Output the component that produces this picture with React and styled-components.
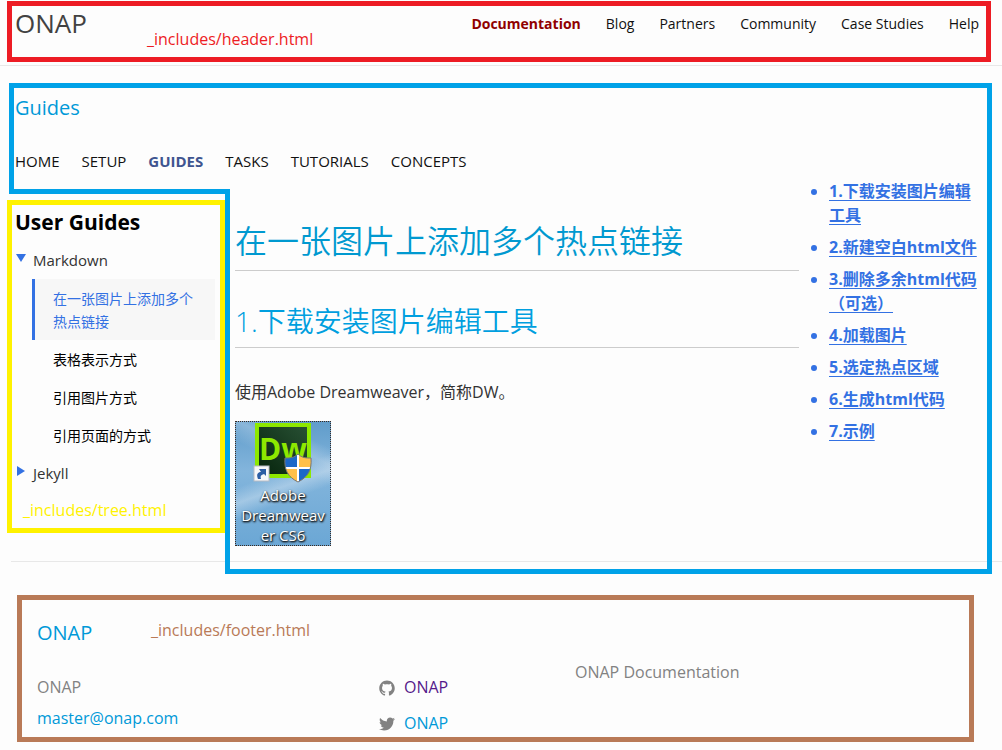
import React, { useState } from "react";
import styled, { createGlobalStyle } from "styled-components";

const GlobalStyle = createGlobalStyle`
  * { box-sizing: border-box; }
  body {
    margin: 0;
    background: #fdfdfd;
    color: #333;
    font-family: "Open Sans", "Noto Sans CJK SC", sans-serif;
    font-size: 16px;
    line-height: 24px;
  }
  h1, h2, h3, p, ul, figure { margin: 0; padding: 0; font-weight: 400; }
  a { color: inherit; text-decoration: none; }
  button { font: inherit; color: inherit; border: 0; background: none; padding: 0; }
`;

const FileLabel = styled.span`
  color: ${(p) => p.$color};
  font-size: 16px;
  line-height: 20px;
`;

/* Header */
const HeaderBar = styled.header`
  padding: 1px 11px 3px 7px;
  border-bottom: 1px solid #e8e8e8;
`;

const HeaderFrame = styled.div`
  display: flex;
  align-items: flex-start;
  border: 5px solid #ed1c24;
  padding: 0 7px 0 3px;
  min-height: 61px;
  ${FileLabel} { margin-top: 23px; }
`;

const SiteTitle = styled.a`
  width: 132px;
  font-size: 26px;
  line-height: 34px;
  color: #424242;
`;

const SiteNav = styled.nav`
  display: flex;
  gap: 25px;
  margin: 8px 0 0 auto;
`;

const NavLink = styled.a`
  font-size: 14px;
  line-height: 20px;
  color: ${(p) => p.$color || "#111"};
  font-weight: ${(p) => (p.$active ? 700 : 400)};
`;

/* Guides frame */
const Main = styled.main`
  margin: 17px 10px 0 9px;
`;

const GuidesTop = styled.section`
  border: 5px solid #00a2e8;
  border-bottom: 0;
  padding: 6px 1px 18px;
`;

const SectionTitle = styled.h2`
  font-size: 20px;
  line-height: 28px;
  color: #0099d8;
`;

const Tabs = styled.nav`
  display: flex;
  gap: 22px;
  margin-top: 29px;
`;

const TabLink = styled(NavLink)`
  font-size: 15px;
`;

const Columns = styled.div`
  display: grid;
  grid-template-columns: 216px 1fr;
`;

const SideColumn = styled.div`
  border-top: 5px solid #00a2e8;
`;

const TreeFrame = styled.aside`
  margin: 6px 0 0 -2px;
  border: 5px solid #fff200;
  padding: 3px 5px 8px 3px;
  display: flex;
  flex-direction: column;
  ${FileLabel} { margin: 15px 0 0 8px; }
`;

const TreeTitle = styled.h2`
  font-size: 21px;
  line-height: 28px;
  font-weight: 700;
  color: #000;
`;

const TreeToggle = styled.button`
  display: flex;
  align-items: center;
  gap: 6px;
  font-size: 15px;
  line-height: 24px;
  margin-top: ${(p) => p.$gap};
  svg { margin-bottom: 4px; }
`;

const TreeList = styled.ul`
  list-style: none;
  margin: 7px 0 0 17px;
`;

const TreeLink = styled.a`
  display: block;
  padding: 8px 18px 7px;
  border-left: 3px solid ${(p) => (p.$active ? "#3371e3" : "transparent")};
  background: ${(p) => (p.$active ? "#f7f7f7" : "none")};
  color: ${(p) => (p.$active ? "#3371e3" : "#000")};
  font-size: 14px;
  line-height: 23px;
`;

const ContentFrame = styled.div`
  display: flex;
  border: 5px solid #00a2e8;
  border-top: 0;
  padding: 30px 0 23px 5px;
`;

const Article = styled.article`
  flex: 1;
  min-width: 0;
`;

const ArticleTitle = styled.h1`
  font-size: 32px;
  line-height: 44px;
  font-weight: 350;
  color: #0099d0;
  padding-bottom: 7px;
  border-bottom: 1px solid #ccc;
`;

const ArticleHeading = styled.h2`
  font-size: 28px;
  line-height: 40px;
  font-weight: 350;
  color: #009fdf;
  margin-top: 30px;
  padding-bottom: 6px;
  border-bottom: 1px solid #ccc;
`;

const Paragraph = styled.p`
  margin-top: 32px;
`;

const Shortcut = styled.figure`
  width: 96px;
  height: 125px;
  margin-top: 17px;
  padding-top: 1px;
  text-align: center;
  background:
    linear-gradient(160deg, transparent 42%, rgba(205, 224, 240, .5) 52%, transparent 62%),
    linear-gradient(25deg, transparent 62%, rgba(180, 208, 232, .5) 74%, transparent 84%),
    linear-gradient(180deg, #5f9cca, #83b5dc 40%, #6ba7d5);
  outline: 1px dotted #3a2a22;
  outline-offset: -1px;
  svg { display: block; margin: 0 auto; }
`;

const ShortcutName = styled.figcaption`
  color: #fff;
  font-size: 15px;
  line-height: 20px;
  text-shadow: 1px 1px 2px #000, 0 1px 2px #222;
`;

const Toc = styled.ul`
  width: 188px;
  margin-top: -40px;
  padding: 0 6px 0 30px;
  color: #3371e3;
  font-weight: 700;
  li + li { margin-top: 8px; }
  a { text-decoration: underline; text-underline-offset: 3px; text-decoration-thickness: 1px; text-decoration-skip-ink: none; }
`;

/* Footer */
const FooterBar = styled.footer`
  position: relative;
  z-index: -1;
  margin: -13px 0 0 11px;
  padding: 33px 28px 8px 6px;
  border-top: 1px solid #e8e8e8;
`;

const FooterFrame = styled.div`
  border: 5px solid #b97a57;
  padding: 19px 0 2px 15px;
`;

const FooterHead = styled.div`
  display: flex;
  ${SectionTitle} { width: 114px; }
  ${FileLabel} { margin-top: 1px; }
`;

const FooterColumns = styled.div`
  display: grid;
  grid-template-columns: 342fr 196fr 394fr;
  margin-top: 13px;
  color: #828282;
`;

const FooterColumn = styled.div`
  display: flex;
  flex-direction: column;
  align-items: flex-start;
  padding-top: ${(p) => p.$top || "0"};
  gap: ${(p) => p.$gap || "0"};
`;

const FooterLink = styled.a`
  display: flex;
  align-items: center;
  gap: 9px;
  color: ${(p) => p.$color};
  svg { fill: #828282; margin-top: 2px; }
`;

const GITHUB =
  "M7.999,0.431c-4.285,0-7.76,3.474-7.76,7.761 c0,3.428,2.223,6.337,5.307,7.363c0.388,0.071,0.53-0.168,0.53-0.374c0-0.184-0.007-0.672-0.01-1.32 c-2.159,0.469-2.614-1.04-2.614-1.04c-0.353-0.896-0.862-1.135-0.862-1.135c-0.705-0.481,0.053-0.472,0.053-0.472 c0.779,0.055,1.189,0.8,1.189,0.8c0.692,1.186,1.816,0.843,2.258,0.645c0.071-0.502,0.271-0.843,0.493-1.037 C4.86,11.425,3.049,10.76,3.049,7.786c0-0.847,0.302-1.54,0.799-2.082C3.768,5.507,3.501,4.718,3.924,3.65 c0,0,0.652-0.209,2.134,0.796C6.677,4.273,7.34,4.187,8,4.184c0.659,0.003,1.323,0.089,1.943,0.261 c1.482-1.004,2.132-0.796,2.132-0.796c0.423,1.068,0.157,1.857,0.077,2.054c0.497,0.542,0.798,1.235,0.798,2.082 c0,2.981-1.814,3.637-3.543,3.829c0.279,0.24,0.527,0.713,0.527,1.437c0,1.037-0.01,1.874-0.01,2.129 c0,0.208,0.14,0.449,0.534,0.373c3.081-1.028,5.302-3.935,5.302-7.362C15.76,3.906,12.285,0.431,7.999,0.431z";
const TWITTER =
  "M15.969,3.058c-0.586,0.26-1.217,0.436-1.878,0.515c0.675-0.405,1.194-1.045,1.438-1.809 c-0.632,0.375-1.332,0.647-2.076,0.793c-0.596-0.636-1.446-1.033-2.387-1.033c-1.806,0-3.27,1.464-3.27,3.27 c0,0.256,0.029,0.506,0.085,0.745C5.163,5.404,2.753,4.102,1.14,2.124C0.859,2.607,0.698,3.168,0.698,3.767 c0,1.134,0.577,2.135,1.455,2.722C1.616,6.472,1.112,6.325,0.671,6.08c0,0.014,0,0.027,0,0.041c0,1.584,1.127,2.906,2.623,3.206 C3.02,9.402,2.731,9.442,2.433,9.442c-0.211,0-0.416-0.021-0.615-0.059c0.416,1.299,1.624,2.245,3.055,2.271 c-1.119,0.877-2.529,1.4-4.061,1.4c-0.264,0-0.524-0.015-0.78-0.046c1.447,0.928,3.166,1.469,5.013,1.469 c6.015,0,9.304-4.983,9.304-9.304c0-0.142-0.003-0.283-0.009-0.423C14.976,4.29,15.531,3.714,15.969,3.058z";

const SocialIcon = ({ d }) => (
  <svg width="16" height="16" viewBox="0 0 16 16" aria-hidden="true"><path d={d} /></svg>
);

const Arrow = ({ open }) => (
  <svg width="12" height="12" viewBox="0 0 12 12" fill="#3371e3" aria-hidden="true">
    <path d={open ? "M1 2H11L6 10Z" : "M2 1V11L10 6Z"} />
  </svg>
);

const DreamweaverIcon = () => (
  <svg width="62" height="63" viewBox="0 0 62 63" aria-hidden="true">
    <defs>
      <linearGradient id="panel" x1="0" y1="1" x2="1" y2="0">
        <stop offset="0" stopColor="#06240c" />
        <stop offset="1" stopColor="#285034" />
      </linearGradient>
      <clipPath id="shieldShape">
        <path d="M46 32C50 36 54 36 59 36C60 48 56 55 46 60C36 55 32 48 33 36C38 36 42 36 46 32Z" />
      </clipPath>
    </defs>
    <rect x="3" y="1" width="56" height="55" fill="#8de800" />
    <rect x="7" y="5" width="48" height="47" fill="url(#panel)" />
    <text x="7" y="38" fontFamily="Open Sans, sans-serif" fontWeight="700" fontSize="30" fill="#8de800">Dw</text>
    <g clipPath="url(#shieldShape)">
      <rect x="30" y="30" width="16" height="16" fill="#1c68c8" />
      <rect x="46" y="30" width="16" height="16" fill="#ffc04a" />
      <rect x="30" y="46" width="16" height="16" fill="#ffc04a" />
      <rect x="46" y="46" width="16" height="16" fill="#1c68c8" />
      <path d="M46 30V62M30 46H62" stroke="#fff" strokeWidth="2" />
    </g>
    <path d="M46 32C50 36 54 36 59 36C60 48 56 55 46 60C36 55 32 48 33 36C38 36 42 36 46 32Z" fill="none" stroke="#777" strokeWidth="1" />
    <rect x="2" y="44" width="15" height="15" fill="#f7f8fa" stroke="#b8bcc4" />
    <path d="M6 57C4 52 6 50 9 50L7 47H14V54L12 52C9 53 8 54 9 57Z" fill="#2c5ea4" />
  </svg>
);

const siteLinks = ["Blog", "Partners", "Community", "Case Studies", "Help"];
const tabs = ["HOME", "SETUP", "GUIDES", "TASKS", "TUTORIALS", "CONCEPTS"];
const guides = ["在一张图片上添加多个热点链接", "表格表示方式", "引用图片方式", "引用页面的方式"];
const contents = [
  "1.下载安装图片编辑工具",
  "2.新建空白html文件",
  "3.删除多余html代码（可选）",
  "4.加载图片",
  "5.选定热点区域",
  "6.生成html代码",
  "7.示例",
];

export default function App() {
  const [open, setOpen] = useState(true);
  return (
    <>
      <GlobalStyle />
      <HeaderBar>
        <HeaderFrame>
          <SiteTitle href="#">ONAP</SiteTitle>
          <FileLabel $color="#ed1c24">_includes/header.html</FileLabel>
          <SiteNav>
            <NavLink href="#" $active $color="#900000">Documentation</NavLink>
            {siteLinks.map((t) => <NavLink href="#" key={t}>{t}</NavLink>)}
          </SiteNav>
        </HeaderFrame>
      </HeaderBar>

      <Main>
        <GuidesTop>
          <SectionTitle>Guides</SectionTitle>
          <Tabs>
            {tabs.map((t) => (
              <TabLink href="#" key={t} $active={t === "GUIDES"} $color={t === "GUIDES" ? "#3f5590" : "#111"}>{t}</TabLink>
            ))}
          </Tabs>
        </GuidesTop>
        <Columns>
          <SideColumn>
            <TreeFrame>
              <TreeTitle>User Guides</TreeTitle>
              <TreeToggle $gap="12px" aria-expanded={open} onClick={() => setOpen(!open)}>
                <Arrow open={open} />Markdown
              </TreeToggle>
              {open && (
                <TreeList>
                  {guides.map((t, i) => (
                    <li key={t}><TreeLink href="#" $active={i === 0}>{t}</TreeLink></li>
                  ))}
                </TreeList>
              )}
              <TreeToggle $gap="7px" aria-expanded={false}><Arrow />Jekyll</TreeToggle>
              <FileLabel $color="#fff200">_includes/tree.html</FileLabel>
            </TreeFrame>
          </SideColumn>
          <ContentFrame>
            <Article>
              <ArticleTitle>在一张图片上添加多个热点链接</ArticleTitle>
              <ArticleHeading>1.下载安装图片编辑工具</ArticleHeading>
              <Paragraph>使用Adobe Dreamweaver，简称DW。</Paragraph>
              <Shortcut>
                <DreamweaverIcon />
                <ShortcutName>Adobe<br />Dreamweav<br />er CS6</ShortcutName>
              </Shortcut>
            </Article>
            <Toc>
              {contents.map((t) => <li key={t}><a href="#">{t}</a></li>)}
            </Toc>
          </ContentFrame>
        </Columns>
      </Main>

      <FooterBar>
        <FooterFrame>
          <FooterHead>
            <SectionTitle>ONAP</SectionTitle>
            <FileLabel $color="#b97a57">_includes/footer.html</FileLabel>
          </FooterHead>
          <FooterColumns>
            <FooterColumn $top="15px" $gap="7px">
              <span>ONAP</span>
              <FooterLink href="#" $color="#0099d8">master@onap.com</FooterLink>
            </FooterColumn>
            <FooterColumn $top="15px" $gap="12px">
              <FooterLink href="#" $color="#551a8b"><SocialIcon d={GITHUB} />ONAP</FooterLink>
              <FooterLink href="#" $color="#0099d8"><SocialIcon d={TWITTER} />ONAP</FooterLink>
            </FooterColumn>
            <FooterColumn>ONAP Documentation</FooterColumn>
          </FooterColumns>
        </FooterFrame>
      </FooterBar>
    </>
  );
}
